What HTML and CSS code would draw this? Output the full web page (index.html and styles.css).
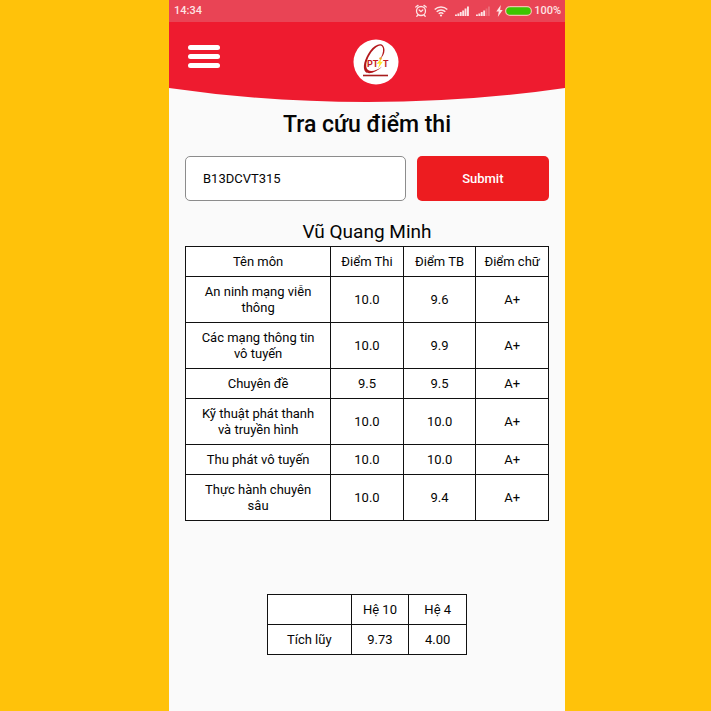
FILE: index.html
```html
<!DOCTYPE html>
<html lang="vi">
<head>
<meta charset="utf-8">
<meta name="viewport" content="width=device-width, initial-scale=1">
<title>Tra cứu điểm thi</title>
<link rel="stylesheet" href="styles.css">
</head>
<body>
<div class="phone">
  <div class="status">
    <span>14:34</span>
    <div class="status-icons">
      <svg width="12" height="14" viewBox="0 0 12 14" fill="none" stroke="currentColor" stroke-linecap="round"><circle cx="6" cy="7" r="4.500" stroke-width="1.300"/><path d="M.8 3 3 1.400M11.200 3 9 1.400M2.800 11.300l-1 1M9.200 11.300l1 1M4.200 6l1.800 1.700L7.800 6" stroke-width="1.300"/></svg>
      <svg class="wifi" width="14" height="12" viewBox="0 0 14 12" fill="none" stroke="currentColor" stroke-width="1.500"><path d="M.7 4.500a9 9 0 0 1 12.600 0M2.700 6.700a6.100 6.100 0 0 1 8.600 0M4.700 8.800a3.300 3.300 0 0 1 4.600 0"/><circle cx="7" cy="10.500" r="1.100" fill="currentColor" stroke="none"/></svg>
      <svg class="signal" width="14" height="10" viewBox="0 0 14 10" fill="currentColor"><path d="M0 8.500h1.900V10H0zM2.400 7.500h1.900V10H2.400zM4.800 6h1.900v4H4.800zM7.200 4.500h1.900V10H7.200zM9.600 2.500h1.900V10H9.600zM12 .5h1.900V10H12z"/></svg>
      <svg class="signal" width="14" height="10" viewBox="0 0 14 10" fill="currentColor"><path d="M0 8.500h1.900V10H0zM2.400 7.500h1.900V10H2.400zM4.800 6h1.900v4H4.800zM7.200 4.500h1.900V10H7.200z"/><path opacity=".25" d="M9.600 2.500h1.900V10H9.600zM12 .5h1.900V10H12z"/></svg>
      <svg class="bolt" width="7" height="12" viewBox="0 0 7 12" fill="currentColor"><path d="M4.800 0 .3 6.500h2.500L1.800 12l4.900-7H4.100z"/></svg>
      <svg class="battery" width="27" height="10" viewBox="0 0 27 10"><rect x=".6" y=".6" width="25.800" height="8.800" rx="4.400" fill="#3dc500" stroke="#f7bcae" stroke-width="1.200"/></svg>
      <span>100%</span>
    </div>
  </div>
  <header class="header">
    <svg class="curve" viewBox="0 0 396 80" preserveAspectRatio="none" aria-hidden="true"><path d="M0 0H396V66Q300 80 198 80T0 66Z" fill="#ee1b2f"/></svg>
    <button class="menu" type="button" aria-label="Menu"><i></i><i></i><i></i></button>
    <svg class="logo" width="46" height="46" viewBox="0 0 46 46" role="img" aria-label="PTIT">
      <circle cx="23" cy="23" r="22.500" fill="#fff"/>
      <path fill="#b3181c" fill-rule="evenodd" d="M31.500 11C31 2.500 23 4 17 12C11.500 19.500 9 29 12.500 33C16 36 24 33 29 27.500C24 31.500 18 33.500 15 31C11.500 28 13.500 20 18.500 13C24 6 29 4.500 30 9.500C30.500 13 29 17 27 20.500C30 17 31.500 14.500 31.500 11Z"/>
      <text class="logo-text" x="14" y="28">PT</text>
      <text class="logo-text" x="30" y="28">T</text>
      <path d="m28.500 19-5 6 3-.5-1.500 5 5-7-2.500.5z" fill="#ffe42a"/>
      <circle cx="27.500" cy="19.500" r="1.200" fill="#f39b22"/>
      <path d="M10 36.500h25" stroke="#a81c1c" stroke-width="1.600"/>
    </svg>
  </header>
  <main class="content">
    <h1>Tra cứu điểm thi</h1>
    <form class="search">
      <input type="text" value="B13DCVT315" aria-label="Mã sinh viên">
      <button type="button">Submit</button>
    </form>
    <h2>Vũ Quang Minh</h2>
    <table class="grades">
      <colgroup><col class="subject"><col><col><col></colgroup>
      <thead><tr><th>Tên môn</th><th>Điểm Thi</th><th>Điểm TB</th><th>Điểm chữ</th></tr></thead>
      <tbody>
        <tr><td>An ninh mạng viễn thông</td><td>10.0</td><td>9.6</td><td>A+</td></tr>
        <tr><td>Các mạng thông tin vô tuyến</td><td>10.0</td><td>9.9</td><td>A+</td></tr>
        <tr><td>Chuyên đề</td><td>9.5</td><td>9.5</td><td>A+</td></tr>
        <tr><td>Kỹ thuật phát thanh và truyền hình</td><td>10.0</td><td>10.0</td><td>A+</td></tr>
        <tr><td>Thu phát vô tuyến</td><td>10.0</td><td>10.0</td><td>A+</td></tr>
        <tr><td>Thực hành chuyên sâu</td><td>10.0</td><td>9.4</td><td>A+</td></tr>
      </tbody>
    </table>
    <table class="summary">
      <colgroup><col class="label"><col><col></colgroup>
      <thead><tr><td></td><th>Hệ 10</th><th>Hệ 4</th></tr></thead>
      <tbody><tr><th>Tích lũy</th><td>9.73</td><td>4.00</td></tr></tbody>
    </table>
  </main>
</div>
</body>
</html>
```
FILE: styles.css
```css
* { box-sizing: border-box; }
body {
  margin: 0;
  min-height: 100vh;
  display: grid;
  grid-template-columns: 169fr 396fr 146fr;
  background: #ffc20a;
  color: #050505;
  font: 13px/16px Roboto, sans-serif;
}
.phone {
  grid-column: 2;
  min-width: 0;
  background: #fafafa;
}
.status {
  height: 22px;
  padding: 0 4px 0 5px;
  display: flex;
  align-items: center;
  justify-content: space-between;
  background: #e94455;
  color: #fde3e4;
  font-size: 11px;
  font-weight: 500;
}
.status-icons { display: flex; align-items: center; }
.wifi { margin-left: 7px; }
.signal { margin-left: 7px; }
.bolt { margin-left: 6px; }
.battery { margin: 0 2px; }
.header {
  position: relative;
  height: 80px;
  padding: 17px 19px;
  display: grid;
  grid-template-columns: 1fr auto 1fr;
  align-items: start;
}
.curve { position: absolute; inset: 0; width: 100%; height: 100%; }
.menu {
  position: relative;
  width: 32px;
  margin-top: 6px;
  padding: 0;
  display: flex;
  flex-direction: column;
  gap: 4px;
  border: 0;
  background: none;
}
.menu i { width: 100%; height: 5px; border-radius: 3px; background: #fff; }
.logo { position: relative; margin-left: 18px; }
.logo-text { font: 700 9px Roboto, sans-serif; fill: #c31b20; }
.content { padding: 9px 16px 16px; }
h1 { margin: 0; font-size: 23px; line-height: 28px; font-weight: 500; text-align: center; }
.search {
  margin: 17px 0 18px;
  display: grid;
  grid-template-columns: 5fr 3fr;
  gap: 11px;
}
.search input, .search button {
  min-width: 0;
  height: 45px;
  border-radius: 5px;
  font: 13px/16px Roboto, sans-serif;
}
.search input { padding: 0 17px; border: 1px solid #8c8c8c; background: #fff; color: #050505; }
.search button { border: 0; background: #ed1c20; color: #fff; font-weight: 500; }
h2 { margin: 0; padding-bottom: 2px; font-size: 19px; line-height: 25px; font-weight: 400; text-align: center; }
table { table-layout: fixed; border-collapse: collapse; background: #fff; }
th, td { height: 30px; padding: 7px 12px 6px; border: 1px solid #111; font-weight: 400; text-align: center; }
.grades { width: 100%; }
th, td:not(:first-child) { padding-left: 0; padding-right: 0; }
.subject { width: 40%; }
.summary { width: 55%; margin: 73px auto 0; }
.label { width: 42%; }
```
